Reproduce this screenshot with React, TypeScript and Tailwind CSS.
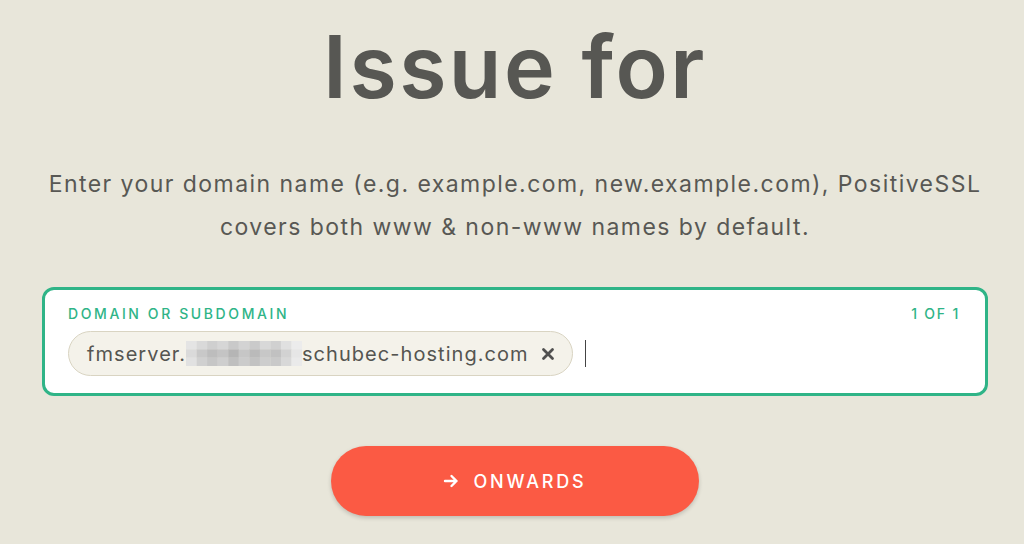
import React from "react";

const blur = [
  ["#e4e4e4", "#d9d9d9", "#cfcfcf", "#d6d6d6", "#c9c9c9", "#d3d3d3", "#cacaca", "#d8d8d8", "#d0d0d0", "#e0e0e0", "#ececec"],
  ["#dadada", "#c8c8c8", "#bdbdbd", "#c4c4c4", "#b5b5b5", "#c6c6c6", "#bababa", "#c7c7c7", "#c1c1c1", "#d2d2d2", "#e6e6e6"],
  ["#e1e1e1", "#d0d0d0", "#c6c6c6", "#cecece", "#bfbfbf", "#cbcbcb", "#c2c2c2", "#cdcdcd", "#c9c9c9", "#d8d8d8", "#eaeaea"],
];

export default function App() {
  return (
    <div
      className="w-[1024px] h-[544px] overflow-hidden bg-[#e8e6da] text-[#555551]"
      style={{ fontFamily: "Inter, 'Noto Sans', sans-serif" }}
    >
      <div className="ml-[42px] w-[946px] flex flex-col items-center">
        <h1 className="mt-[13px] text-[86px] leading-[108px] font-semibold tracking-[2.5px] text-[#575753]">
          Issue for
        </h1>
        <p className="mt-[42px] text-[23px] leading-[43px] tracking-[1.45px] text-center text-[#585854] whitespace-nowrap">
          Enter your domain name (e.g. example.com, new.example.com), PositiveSSL
          <br />
          covers both www &amp; non-www names by default.
        </p>
        <div className="mt-[38px] w-full h-[109px] rounded-[12px] border-[3px] border-[#2fb487] bg-white pl-[23px] pr-[25px] pt-[16px]">
          <div className="flex justify-between text-[14px] leading-[16px] tracking-[2.6px] text-[#2fb487] font-medium">
            <span>DOMAIN OR SUBDOMAIN</span>
            <span className="tracking-[1.8px]">1 OF 1</span>
          </div>
          <div className="mt-[9px] flex items-center">
            <div className="h-[45px] flex items-center rounded-full border border-[#d9d4c2] bg-[#f4f2ea] pl-[18px] pr-[17px] text-[20px] tracking-[1.05px] text-[#555551]">
              <span>fmserver.</span>
              <svg width="116" height="25" viewBox="0 0 11 3" preserveAspectRatio="none">
                {blur.map((row, r) =>
                  row.map((c, i) => <rect key={`${r}-${i}`} x={i} y={r} width="1.02" height="1.02" fill={c} />)
                )}
              </svg>
              <span>schubec-hosting.com</span>
              <svg width="14" height="14" viewBox="0 0 14 14" className="ml-[12px]">
                <path d="M2.5 2.5 L11.5 11.5 M11.5 2.5 L2.5 11.5" stroke="#505050" strokeWidth="2.8" strokeLinecap="round" />
              </svg>
            </div>
            <div className="ml-[12px] w-[1.5px] h-[27px] bg-[#444]" />
          </div>
        </div>
        <button className="mt-[50px] w-[368px] h-[70px] rounded-full bg-[#fb5a44] shadow-[0_2px_4px_rgba(0,0,0,0.18)] flex items-center justify-center gap-[14px] text-white text-[18px] font-medium tracking-[2.8px]">
          <svg width="16" height="16" viewBox="0 0 16 16">
            <path d="M2 8 H13.5 M8.5 3 L13.5 8 L8.5 13" stroke="white" strokeWidth="2.4" fill="none" strokeLinecap="round" strokeLinejoin="round" />
          </svg>
          <span>ONWARDS</span>
        </button>
      </div>
    </div>
  );
}
